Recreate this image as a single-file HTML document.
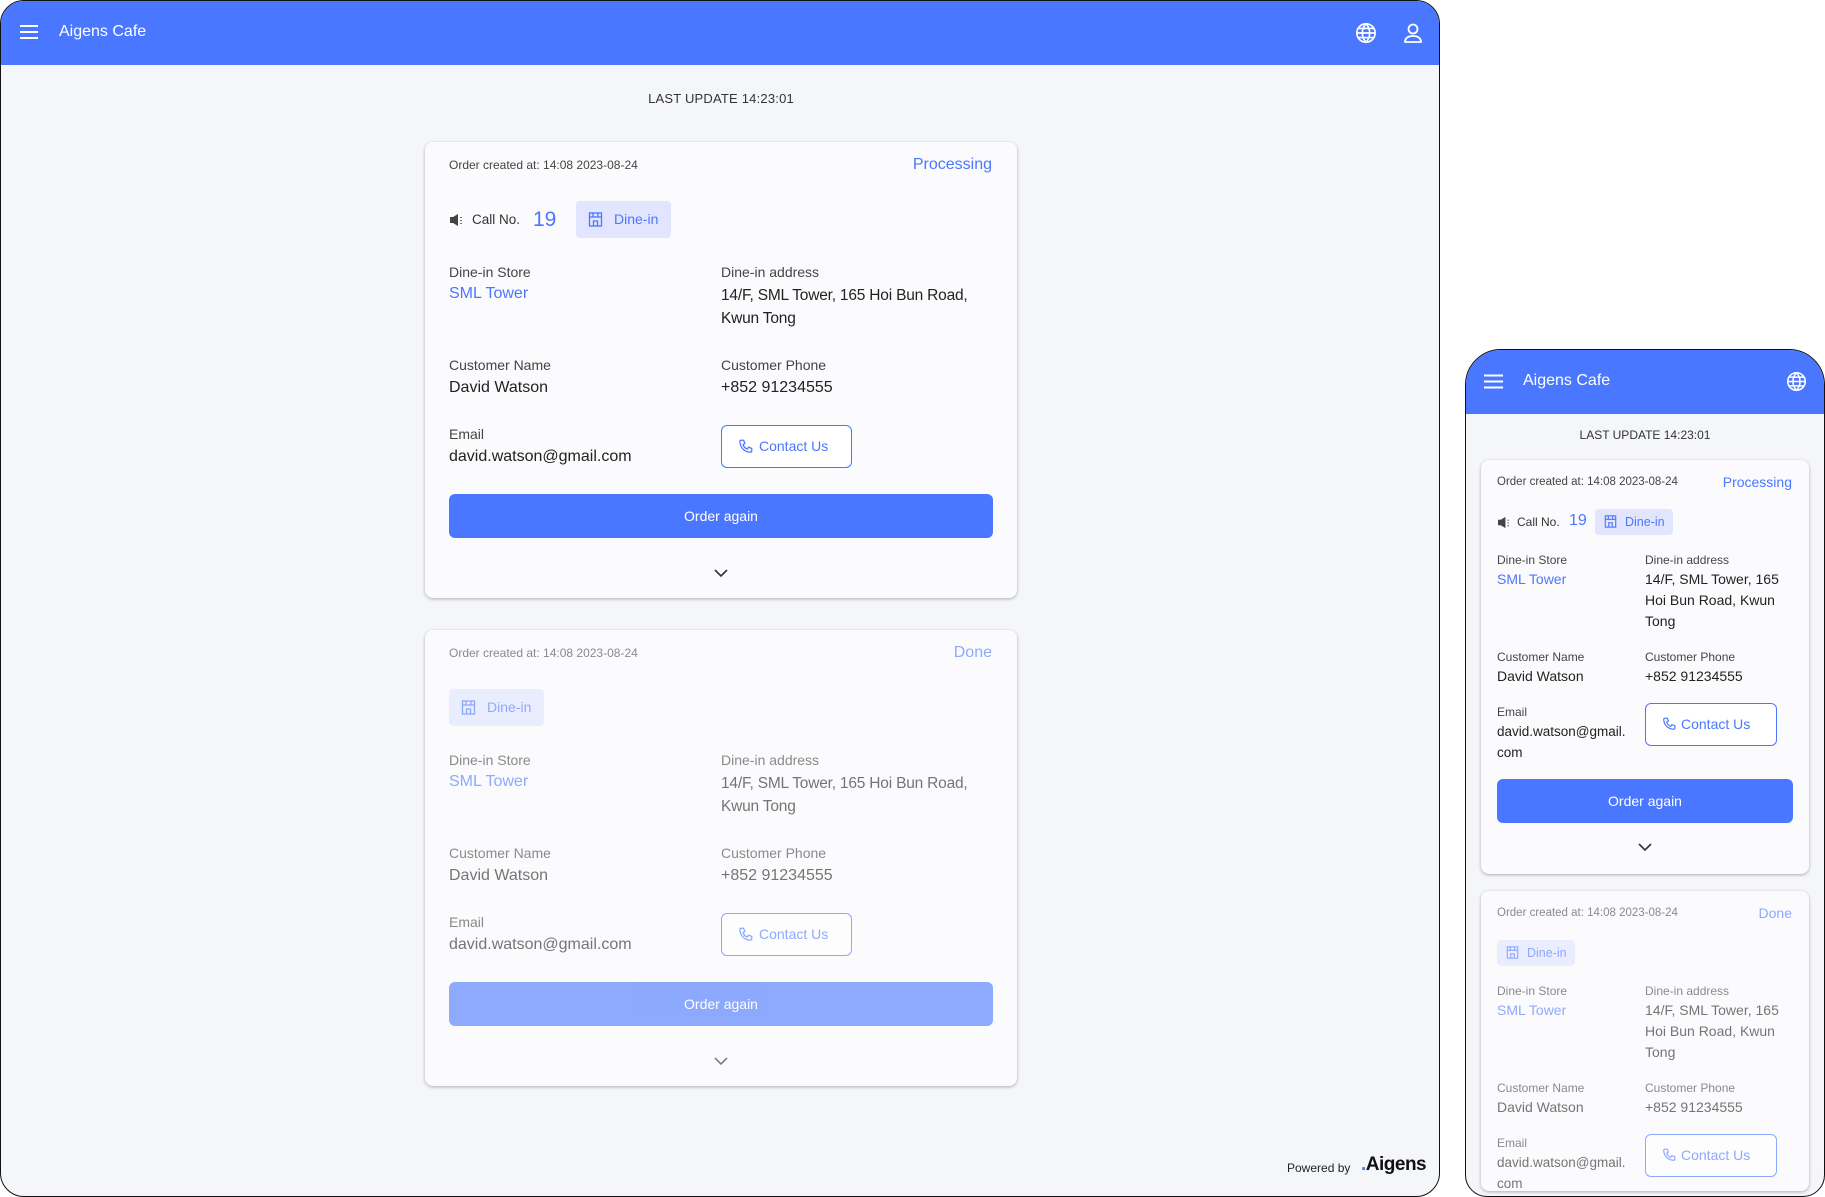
<!DOCTYPE html>
<html><head><meta charset="utf-8"><style>
*{margin:0;padding:0;box-sizing:border-box}
html,body{width:1825px;height:1197px;overflow:hidden}
body{background:#fff;font-family:"Liberation Sans",sans-serif;position:relative;color:#222}
.abs{position:absolute}
.frame{position:absolute;border:1px solid #111;overflow:hidden;background:#f5f6fa}
.hdr{position:absolute;left:0;top:0;right:0;height:64px;background:#4a77ff;color:#fff}
.t{position:absolute;line-height:20px;white-space:nowrap}
.card{position:absolute;background:#fbfbfd;border-radius:8px;box-shadow:0 1px 3px rgba(0,0,0,.3)}
.blue{color:#4a77ff}
.lbl{color:#444}
.chip{position:absolute;background:#e1e5fd;border-radius:4px;color:#4a77ff}
.btn{position:absolute;border:1px solid #4a77ff;border-radius:6px;color:#4a77ff;background:#fff}
.oa{position:absolute;background:#4a77ff;border-radius:6px;color:#fff;text-align:center}
.fade>*{opacity:.62}
</style></head><body>

<!-- desktop -->
<div class="frame" style="left:0;top:0;width:1440px;height:1197px;border-radius:24px">
 <div class="hdr">
  <svg class="abs" style="left:18px;top:23px" width="20" height="16" viewBox="0 0 20 16"><path d="M1 2h18M1 8h18M1 14h18" stroke="#fff" stroke-width="2"/></svg>
  <div class="t" style="left:58px;top:21px;font-size:16px">Aigens Cafe</div>
  <svg class="abs" style="left:1354px;top:21px" width="22" height="22" viewBox="0 0 24 24" fill="none" stroke="#fff" stroke-width="1.8"><circle cx="12" cy="12" r="10"/><path d="M2 12h20M12 2c3 3 4 6.5 4 10s-1 7-4 10c-3-3-4-6.5-4-10s1-7 4-10M4 7h16M4 17h16"/></svg>
  <svg class="abs" style="left:1402px;top:21px" width="20" height="22" viewBox="0 0 20 22" fill="none" stroke="#fff" stroke-width="1.8"><circle cx="10" cy="7" r="4.5"/><path d="M2 20c0-4 3.5-6 8-6s8 2 8 6z"/></svg>
 </div>
 <div class="t" style="left:0;width:1440px;text-align:center;top:88px;font-size:13px;color:#333;letter-spacing:.2px">LAST UPDATE 14:23:01</div>

 <div class="card" style="left:424px;top:141px;width:592px;height:456px">
  <div class="t" style="left:24px;top:13px;font-size:12px;color:#444">Order created at: 14:08 2023-08-24</div>
  <div class="t blue" style="right:25px;top:13px;font-size:16px">Processing</div>
  <svg class="abs" style="left:24px;top:71px" width="16" height="14" viewBox="0 0 16 14"><path d="M1 4h3l5-3v12l-5-3H1z" fill="#444"/><path d="M12 4v1M12 7v1M12 10v1" stroke="#444" stroke-width="1.5"/></svg>
  <div class="t" style="left:47px;top:68px;font-size:13.5px;color:#333">Call No.</div>
  <div class="t blue" style="left:108px;top:67px;font-size:21px;line-height:22px">19</div>
  <div class="chip" style="left:151px;top:59px;width:95px;height:37px"><svg class="abs" style="left:12px;top:11px" width="15" height="15" viewBox="0 0 15 15" fill="none" stroke="#4a77ff" stroke-width="1.3"><rect x="1.5" y="1" width="12" height="13"/><path d="M1.5 5h12M5 1v4M10 1v4M5.5 14V9h4v5"/></svg><div class="t" style="left:38px;top:8px;font-size:14px">Dine-in</div></div>
  <div class="t lbl" style="left:24px;top:120px;font-size:14px">Dine-in Store</div>
  <div class="t blue" style="left:24px;top:142px;font-size:16px">SML Tower</div>
  <div class="t lbl" style="left:296px;top:120px;font-size:14px">Dine-in address</div>
  <div class="t" style="left:296px;top:142px;font-size:15.5px;line-height:23px;width:285px;white-space:normal;letter-spacing:-.2px">14/F, SML Tower, 165 Hoi Bun Road, Kwun Tong</div>
  <div class="t lbl" style="left:24px;top:213px;font-size:14px">Customer Name</div>
  <div class="t" style="left:24px;top:236px;font-size:16px">David Watson</div>
  <div class="t lbl" style="left:296px;top:213px;font-size:14px">Customer Phone</div>
  <div class="t" style="left:296px;top:236px;font-size:16px">+852 91234555</div>
  <div class="t lbl" style="left:24px;top:282px;font-size:14px">Email</div>
  <div class="t" style="left:24px;top:305px;font-size:16px">david.watson@gmail.com</div>
  <div class="btn" style="left:296px;top:283px;width:131px;height:43px"><svg class="abs" style="left:16px;top:13px" width="15" height="15" viewBox="0 0 24 24" fill="none" stroke="#4a77ff" stroke-width="2"><path d="M5 2h4l2 5-3 2a11 11 0 0 0 7 7l2-3 5 2v4a2 2 0 0 1-2 2A17 17 0 0 1 3 4a2 2 0 0 1 2-2"/></svg><div class="t" style="left:37px;top:10px;font-size:14px">Contact Us</div></div>
  <div class="oa" style="left:24px;top:352px;width:544px;height:44px;line-height:44px;font-size:14px">Order again</div>
  <svg class="abs" style="left:289px;top:427px" width="14" height="9" viewBox="0 0 14 9"><path d="M1 1l6 6 6-6" stroke="#333" stroke-width="1.6" fill="none"/></svg>
 </div>

 <div class="card fade" style="left:424px;top:629px;width:592px;height:456px">
  <div class="t" style="left:24px;top:13px;font-size:12px;color:#444">Order created at: 14:08 2023-08-24</div>
  <div class="t blue" style="right:25px;top:13px;font-size:16px">Done</div>
  <div class="chip" style="left:24px;top:59px;width:95px;height:37px"><svg class="abs" style="left:12px;top:11px" width="15" height="15" viewBox="0 0 15 15" fill="none" stroke="#4a77ff" stroke-width="1.3"><rect x="1.5" y="1" width="12" height="13"/><path d="M1.5 5h12M5 1v4M10 1v4M5.5 14V9h4v5"/></svg><div class="t" style="left:38px;top:8px;font-size:14px">Dine-in</div></div>
  <div class="t lbl" style="left:24px;top:120px;font-size:14px">Dine-in Store</div>
  <div class="t blue" style="left:24px;top:142px;font-size:16px">SML Tower</div>
  <div class="t lbl" style="left:296px;top:120px;font-size:14px">Dine-in address</div>
  <div class="t" style="left:296px;top:142px;font-size:15.5px;line-height:23px;width:285px;white-space:normal;letter-spacing:-.2px">14/F, SML Tower, 165 Hoi Bun Road, Kwun Tong</div>
  <div class="t lbl" style="left:24px;top:213px;font-size:14px">Customer Name</div>
  <div class="t" style="left:24px;top:236px;font-size:16px">David Watson</div>
  <div class="t lbl" style="left:296px;top:213px;font-size:14px">Customer Phone</div>
  <div class="t" style="left:296px;top:236px;font-size:16px">+852 91234555</div>
  <div class="t lbl" style="left:24px;top:282px;font-size:14px">Email</div>
  <div class="t" style="left:24px;top:305px;font-size:16px">david.watson@gmail.com</div>
  <div class="btn" style="left:296px;top:283px;width:131px;height:43px"><svg class="abs" style="left:16px;top:13px" width="15" height="15" viewBox="0 0 24 24" fill="none" stroke="#4a77ff" stroke-width="2"><path d="M5 2h4l2 5-3 2a11 11 0 0 0 7 7l2-3 5 2v4a2 2 0 0 1-2 2A17 17 0 0 1 3 4a2 2 0 0 1 2-2"/></svg><div class="t" style="left:37px;top:10px;font-size:14px">Contact Us</div></div>
  <div class="oa" style="left:24px;top:352px;width:544px;height:44px;line-height:44px;font-size:14px">Order again</div>
  <svg class="abs" style="left:289px;top:427px" width="14" height="9" viewBox="0 0 14 9"><path d="M1 1l6 6 6-6" stroke="#333" stroke-width="1.6" fill="none"/></svg>
 </div>

 <div class="t" style="left:1286px;top:1157px;font-size:12px;color:#222">Powered by</div>
 <div class="t" style="left:1360px;top:1154px;font-size:19px;font-weight:bold;color:#111;letter-spacing:-.5px"><span style="color:#4a77ff">.</span>Aigens</div>
</div>

<!-- mobile -->
<div class="frame" style="left:1465px;top:349px;width:360px;height:848px;border-radius:36px 36px 22px 22px">
 <div class="hdr">
  <svg class="abs" style="left:18px;top:24px" width="19" height="15" viewBox="0 0 19 15"><path d="M0 1.5h19M0 7.5h19M0 13.5h19" stroke="#fff" stroke-width="2"/></svg>
  <div class="t" style="left:57px;top:21px;font-size:16px">Aigens Cafe</div>
  <svg class="abs" style="left:320px;top:21px" width="21" height="21" viewBox="0 0 24 24" fill="none" stroke="#fff" stroke-width="1.8"><circle cx="12" cy="12" r="10"/><path d="M2 12h20M12 2c3 3 4 6.5 4 10s-1 7-4 10c-3-3-4-6.5-4-10s1-7 4-10M4 7h16M4 17h16"/></svg>
 </div>
 <div class="t" style="left:0;width:358px;text-align:center;top:75px;font-size:12px;color:#333">LAST UPDATE 14:23:01</div>

 <div class="card" style="left:15px;top:110px;width:328px;height:414px">
  <div class="t" style="left:16px;top:12px;font-size:11.5px;color:#444">Order created at: 14:08 2023-08-24</div>
  <div class="t blue" style="right:17px;top:12px;font-size:14px">Processing</div>
  <svg class="abs" style="left:16px;top:56px" width="15" height="13" viewBox="0 0 16 14"><path d="M1 4h3l5-3v12l-5-3H1z" fill="#444"/><path d="M12 4v1M12 7v1M12 10v1" stroke="#444" stroke-width="1.5"/></svg>
  <div class="t" style="left:36px;top:52px;font-size:12px;color:#333">Call No.</div>
  <div class="t blue" style="left:88px;top:51px;font-size:16px">19</div>
  <div class="chip" style="left:114px;top:49px;width:78px;height:26px"><svg class="abs" style="left:9px;top:6px" width="13" height="13" viewBox="0 0 15 15" fill="none" stroke="#4a77ff" stroke-width="1.3"><rect x="1.5" y="1" width="12" height="13"/><path d="M1.5 5h12M5 1v4M10 1v4M5.5 14V9h4v5"/></svg><div class="t" style="left:30px;top:3px;font-size:12.5px">Dine-in</div></div>
  <div class="t lbl" style="left:16px;top:90px;font-size:12px">Dine-in Store</div>
  <div class="t blue" style="left:16px;top:109px;font-size:14px">SML Tower</div>
  <div class="t lbl" style="left:164px;top:90px;font-size:12px">Dine-in address</div>
  <div class="t" style="left:164px;top:109px;font-size:14px;line-height:21px;width:150px;white-space:normal">14/F, SML Tower, 165 Hoi Bun Road, Kwun Tong</div>
  <div class="t lbl" style="left:16px;top:187px;font-size:12px">Customer Name</div>
  <div class="t" style="left:16px;top:206px;font-size:14px">David Watson</div>
  <div class="t lbl" style="left:164px;top:187px;font-size:12px">Customer Phone</div>
  <div class="t" style="left:164px;top:206px;font-size:14px">+852 91234555</div>
  <div class="t lbl" style="left:16px;top:242px;font-size:12px">Email</div>
  <div class="t" style="left:16px;top:261px;font-size:13.5px;line-height:21px">david.watson@gmail.<br>com</div>
  <div class="btn" style="left:164px;top:243px;width:132px;height:43px"><svg class="abs" style="left:16px;top:13px" width="14" height="14" viewBox="0 0 24 24" fill="none" stroke="#4a77ff" stroke-width="2"><path d="M5 2h4l2 5-3 2a11 11 0 0 0 7 7l2-3 5 2v4a2 2 0 0 1-2 2A17 17 0 0 1 3 4a2 2 0 0 1 2-2"/></svg><div class="t" style="left:35px;top:10px;font-size:14px">Contact Us</div></div>
  <div class="oa" style="left:16px;top:319px;width:296px;height:44px;line-height:44px;font-size:14px">Order again</div>
  <svg class="abs" style="left:157px;top:383px" width="14" height="9" viewBox="0 0 14 9"><path d="M1 1l6 6 6-6" stroke="#333" stroke-width="1.6" fill="none"/></svg>
 </div>

 <div class="card fade" style="left:15px;top:541px;width:328px;height:300px">
  <div class="t" style="left:16px;top:12px;font-size:11.5px;color:#444">Order created at: 14:08 2023-08-24</div>
  <div class="t blue" style="right:17px;top:12px;font-size:14px">Done</div>
  <div class="chip" style="left:16px;top:49px;width:78px;height:26px"><svg class="abs" style="left:9px;top:6px" width="13" height="13" viewBox="0 0 15 15" fill="none" stroke="#4a77ff" stroke-width="1.3"><rect x="1.5" y="1" width="12" height="13"/><path d="M1.5 5h12M5 1v4M10 1v4M5.5 14V9h4v5"/></svg><div class="t" style="left:30px;top:3px;font-size:12.5px">Dine-in</div></div>
  <div class="t lbl" style="left:16px;top:90px;font-size:12px">Dine-in Store</div>
  <div class="t blue" style="left:16px;top:109px;font-size:14px">SML Tower</div>
  <div class="t lbl" style="left:164px;top:90px;font-size:12px">Dine-in address</div>
  <div class="t" style="left:164px;top:109px;font-size:14px;line-height:21px;width:150px;white-space:normal">14/F, SML Tower, 165 Hoi Bun Road, Kwun Tong</div>
  <div class="t lbl" style="left:16px;top:187px;font-size:12px">Customer Name</div>
  <div class="t" style="left:16px;top:206px;font-size:14px">David Watson</div>
  <div class="t lbl" style="left:164px;top:187px;font-size:12px">Customer Phone</div>
  <div class="t" style="left:164px;top:206px;font-size:14px">+852 91234555</div>
  <div class="t lbl" style="left:16px;top:242px;font-size:12px">Email</div>
  <div class="t" style="left:16px;top:261px;font-size:13.5px;line-height:21px">david.watson@gmail.<br>com</div>
  <div class="btn" style="left:164px;top:243px;width:132px;height:43px"><svg class="abs" style="left:16px;top:13px" width="14" height="14" viewBox="0 0 24 24" fill="none" stroke="#4a77ff" stroke-width="2"><path d="M5 2h4l2 5-3 2a11 11 0 0 0 7 7l2-3 5 2v4a2 2 0 0 1-2 2A17 17 0 0 1 3 4a2 2 0 0 1 2-2"/></svg><div class="t" style="left:35px;top:10px;font-size:14px">Contact Us</div></div>
 </div>
</div>
</body></html>
